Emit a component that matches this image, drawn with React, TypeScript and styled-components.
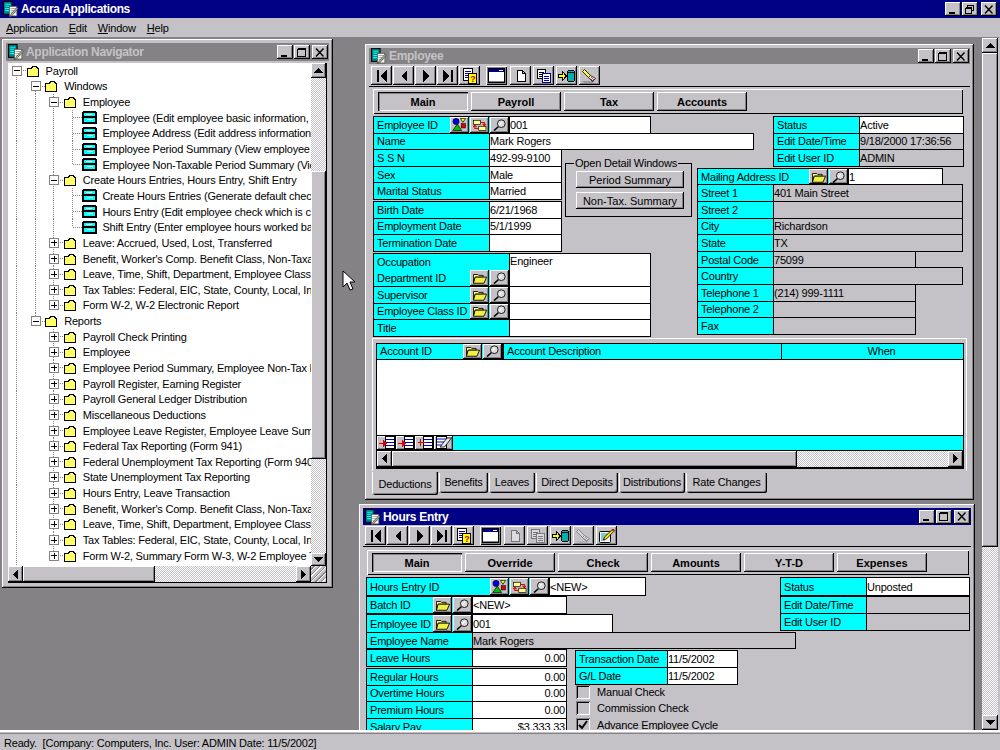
import React from 'react';
import styled, { createGlobalStyle, css } from 'styled-components';

const FACE = '#c4c2c6';
const GRAY = '#848284';
const NAVY = '#000084';
const CYAN = '#00ffff';

const GlobalStyle = createGlobalStyle`
  html, body {
    margin: 0;
    padding: 0;
    overflow: hidden;
    background: ${FACE};
  }
  * { box-sizing: border-box; }
  body {
    font-family: "Liberation Sans", Arial, sans-serif;
    font-size: 11px;
    letter-spacing: -0.2px;
    color: #000;
  }
`;

const raised = css`
  background-color: ${FACE};
  box-shadow: inset -1px -1px 0 #000, inset 1px 1px 0 #fff, inset -2px -2px 0 ${GRAY};
`;

const dither = css`
  background: repeating-conic-gradient(#fff 0 25%, ${FACE} 0 50%) 0 0 / 2px 2px;
`;

const Screen = styled.div`
  width: 1000px;
  height: 750px;
  display: flex;
  flex-direction: column;
  overflow: hidden;
  background: ${FACE};
`;

const AppTitle = styled.div`
  height: 18px;
  flex: none;
  background: ${NAVY};
  color: #fff;
  display: flex;
  align-items: center;
  padding: 0 3px;
  gap: 2px;
  font-size: 12px;
  font-weight: 700;
  letter-spacing: -0.35px;
`;

const TitleText = styled.span`
  flex: 1;
  white-space: nowrap;
`;

const WinButtons = styled.div<{ $spread?: number }>`
  display: flex;
  gap: 1px;
  flex: none;
  & > button:last-child { margin-left: ${p => p.$spread ?? 1}px; }
`;

const WinButton = styled.button`
  ${raised};
  width: 16px;
  height: 14px;
  border: none;
  padding: 0;
  display: flex;
  align-items: center;
  justify-content: center;
`;

const MenuBar = styled.nav`
  height: 19px;
  flex: none;
  display: flex;
  align-items: center;
  gap: 11px;
  padding: 0 6px;
`;

const MenuItem = styled.span`
  display: inline-block;
  font-size: 11px;
  &::first-letter { text-decoration: underline; }
`;

const Desktop = styled.div`
  flex: 1;
  min-height: 0;
  display: flex;
  background: ${GRAY};
  border-top: 1px solid ${GRAY};
  border-right: 2px solid ${FACE};
`;

const Canvas = styled.div`
  position: relative;
  flex: 1;
  overflow: hidden;
`;

const Cursor = styled.svg`
  position: absolute;
  left: 342px;
  top: 232px;
`;

const StatusBar = styled.footer`
  height: 20px;
  flex: none;
  border-top: 2px solid #fff;
  box-shadow: inset 0 1px 0 ${FACE}, inset 0 2px 0 ${GRAY};
  padding: 3px 0 0 4px;
  display: flex;
  align-items: center;
  white-space: pre;
`;

const Win = styled.section<{ $x: number; $y: number; $w: number; $h: number }>`
  ${raised};
  position: absolute;
  left: ${p => p.$x}px;
  top: ${p => p.$y}px;
  width: ${p => p.$w}px;
  height: ${p => p.$h}px;
  padding: 4px;
  display: flex;
  flex-direction: column;
`;

const WinTitle = styled.header<{ $active?: boolean; $h?: number }>`
  flex: none;
  height: ${p => p.$h ?? 16}px;
  background: ${p => (p.$active ? NAVY : GRAY)};
  color: ${p => (p.$active ? '#fff' : FACE)};
  display: flex;
  align-items: center;
  padding: 0 1px 0 2px;
  gap: 2px;
  font-size: 12px;
  font-weight: 700;
  letter-spacing: -0.3px;
`;

/* scrollbars */
const VBar = styled.div<{ $w?: number }>`
  flex: 0 0 ${p => p.$w ?? 15}px;
  display: flex;
  flex-direction: column;
`;

const HBar = styled.div<{ $h?: number }>`
  flex: 0 0 ${p => p.$h ?? 16}px;
  display: flex;
`;

const Arrow = styled.div<{ $size?: number }>`
  ${raised};
  flex: 0 0 ${p => p.$size ?? 15}px;
  display: flex;
  align-items: center;
  justify-content: center;
`;

const Thumb = styled.div<{ $size: number }>`
  ${raised};
  flex: 0 0 ${p => p.$size}px;
`;

const Track = styled.div<{ $size?: number }>`
  ${dither};
  flex: ${p => (p.$size ? `0 0 ${p.$size}px` : '1')};
`;

const Corner = styled.div`
  flex: 0 0 15px;
  background-color: ${FACE};
  background-image: repeating-linear-gradient(135deg, transparent 0 2px, ${GRAY} 2px 3px, #fff 3px 4px);
`;

/* tree */
const NavBody = styled.div`
  flex: 1;
  min-height: 0;
  margin: 2px 2px 1px 2px;
  display: flex;
  flex-direction: column;
  border-right: 1px solid #000;
  border-bottom: 1px solid #000;
`;

const TreeRowWrap = styled.div`
  flex: 1;
  min-height: 0;
  display: flex;
`;

const Tree = styled.div`
  flex: 1;
  min-width: 0;
  background: #fff;
  overflow: hidden;
`;

const TreeRow = styled.div`
  height: 15.645px;
  display: flex;
  align-items: center;
  white-space: nowrap;
`;

const Cell = styled.span<{ $v?: 'full' | 'up' | 'down'; $h?: boolean }>`
  flex: 0 0 18.6px;
  height: 100%;
  display: flex;
  align-items: center;
  background-repeat: no-repeat;
  background-image:
    ${p => (p.$v ? `repeating-linear-gradient(to bottom, ${GRAY} 0 1px, transparent 1px 2px)` : 'none')},
    ${p => (p.$h ? `repeating-linear-gradient(to right, ${GRAY} 0 1px, transparent 1px 2px)` : 'none')};
  background-size: 1px ${p => (p.$v === 'full' ? '100%' : '50%')}, 10px 1px;
  background-position: 8px ${p => (p.$v === 'down' ? '100%' : '0')}, 9px 50%;
`;

const Expander = styled.span<{ $open: boolean }>`
  width: 10px;
  height: 10px;
  margin-left: 4px;
  border: 1px solid ${GRAY};
  background-color: #fff;
  background-repeat: no-repeat;
  background-position: center;
  background-image:
    linear-gradient(#000, #000)
    ${p => (p.$open ? '' : ', linear-gradient(#000, #000)')};
  background-size: 6px 1px ${p => (p.$open ? '' : ', 1px 6px')};
`;

const NodeIcon = styled.span<{ $w: number }>`
  flex: 0 0 ${p => p.$w}px;
  display: flex;
  align-items: center;
`;

/* toolbars */
const ToolBar = styled.div<{ $h?: number; $top?: number }>`
  flex: none;
  height: ${p => p.$h ?? 23}px;
  padding: ${p => p.$top ?? 2}px 0 0 2px;
  display: flex;
  align-items: flex-start;
  border-bottom: 1px solid #000;
`;

const ToolGroup = styled.div<{ $after?: number }>`
  display: flex;
  gap: 1px;
  margin-right: ${p => p.$after ?? 2}px;
`;

const ToolButton = styled.button<{ $off?: boolean; $sunk?: boolean }>`
  ${raised};
  width: 21px;
  height: 19px;
  border: none;
  padding: 0;
  display: flex;
  align-items: center;
  justify-content: center;
  ${p => p.$off && 'svg { filter: grayscale(1) opacity(0.4); }'}
  ${p => p.$sunk && `box-shadow: inset 1px 1px 0 #fff, inset -1px -1px 0 #000, inset 2px 2px 0 ${GRAY}, inset -2px -2px 0 ${GRAY};`}
`;

const PagePanel = styled.div<{ $left: number; $top: number; $w: number }>`
  flex: none;
  margin: ${p => p.$top}px 0 0 ${p => p.$left}px;
  width: ${p => p.$w}px;
  height: 25px;
  padding: 3px 0 0 5px;
  display: flex;
  gap: 2px;
  background: ${FACE};
  box-shadow: inset 1px 1px 0 #fff, inset -1px -1px 0 #000;
`;

const PageTab = styled.button<{ $on?: boolean }>`
  ${raised};
  width: 90px;
  height: 19px;
  margin-right: 1px;
  border: none;
  padding: 0;
  font: 700 11px "Liberation Sans", Arial, sans-serif;
  color: #000;
  ${p => p.$on && `box-shadow: inset 1px 1px 0 #000, inset 2px 2px 0 ${GRAY}, inset -1px -1px 0 #fff;`}
`;

/* form cells */
const Form = styled.div<{ $left: number }>`
  flex: none;
  display: flex;
  padding: 2px 0 0 ${p => p.$left}px;
`;

const Col = styled.div<{ $w?: number; $pushed?: number; $down?: number }>`
  flex: 0 0 ${p => (p.$w ? `${p.$w}px` : 'auto')};
  min-width: 0;
  margin-left: ${p => p.$pushed ?? 0}px;
  margin-top: ${p => p.$down ?? 0}px;
`;

const Split = styled.div`
  display: flex;
  align-items: flex-start;
`;

const Stack = styled.div<{ $gap?: number }>`
  margin-bottom: ${p => p.$gap ?? 2}px;
`;

const Field = styled.div<{ $h?: number }>`
  display: flex;
  height: ${p => p.$h ?? 17.6}px;
  margin-bottom: -1px;
`;

const Label = styled.div<{ $w: number }>`
  flex: 0 0 ${p => p.$w}px;
  background: ${CYAN};
  border: 1px solid #000;
  padding-left: 3px;
  display: flex;
  align-items: center;
  justify-content: space-between;
  white-space: nowrap;
  overflow: hidden;
`;

const DoubleLabel = styled(Label)`
  flex-direction: column;
  align-items: stretch;
`;

const LabelLine = styled.div`
  flex: 1;
  display: flex;
  align-items: center;
  justify-content: space-between;
`;

const Value = styled.div<{ $w: number; $gray?: boolean; $right?: boolean }>`
  flex: 0 0 ${p => p.$w}px;
  margin-left: -1px;
  background: ${p => (p.$gray ? FACE : '#fff')};
  border: 1px solid #000;
  padding: ${p => (p.$right ? '0 1px 0 0' : '0')};
  display: flex;
  align-items: center;
  justify-content: ${p => (p.$right ? 'flex-end' : 'flex-start')};
  white-space: nowrap;
  overflow: hidden;
`;

const TopValue = styled(Value)`
  align-items: flex-start;
  padding-top: 1px;
`;

const Tools = styled.span`
  display: flex;
  gap: 1px;
  flex: none;
  align-self: stretch;
`;

const MiniButton = styled.span`
  ${raised};
  width: 19px;
  display: flex;
  align-items: center;
  justify-content: center;
`;

const DetailGroup = styled.fieldset`
  width: 127px;
  min-width: 0;
  height: 60px;
  margin: 8px 0 0 2px;
  padding: 2px 6px 0 10px;
  border: 1px solid #000;
  display: flex;
  flex-direction: column;
  gap: 4px;
`;

const DetailLegend = styled.legend`
  padding: 0 1px;
  margin-left: -2px;
  white-space: nowrap;
`;

const DetailButton = styled.button`
  ${raised};
  width: 108px;
  height: 17px;
  flex: none;
  border: none;
  padding: 0;
  font: 11px "Liberation Sans", Arial, sans-serif;
  color: #000;
`;

/* embedded grid */
const GridPanel = styled.div`
  flex: none;
  margin: 2px 0 0 3px;
  width: 595px;
  height: 133px;
  padding: 5px 3px 0 4px;
  box-shadow: inset 1px 1px 0 #fff, inset -1px 0 0 #fff;
`;

const Grid = styled.div`
  width: 588px;
  height: 126px;
  border: 1px solid #000;
  border-bottom-width: 2px;
  display: flex;
  flex-direction: column;
  background: #fff;
`;

const GridHead = styled.div`
  flex: 0 0 16px;
  display: flex;
  background: ${CYAN};
  border-bottom: 1px solid #000;
`;

const HeadCell = styled.div<{ $w?: number; $center?: boolean; $rule?: number }>`
  flex: ${p => (p.$w ? `0 0 ${p.$w}px` : '1')};
  display: flex;
  align-items: center;
  justify-content: ${p => (p.$center ? 'center' : 'space-between')};
  padding-left: ${p => (p.$center ? 18 : 3)}px;
  border-right: ${p => p.$rule ?? 0}px solid #000;
  white-space: nowrap;
`;

const GridBody = styled.div`
  flex: 1;
`;

const GridTools = styled.div`
  flex: 0 0 16px;
  display: flex;
  background: ${CYAN};
  border-top: 1px solid #000;
  border-bottom: 1px solid #000;
`;

const GridTool = styled.span`
  ${raised};
  flex: 0 0 19px;
  display: flex;
  align-items: center;
  justify-content: center;
`;

const GridScroll = styled(HBar)`
  flex: 0 0 16px;
  background: ${FACE};
`;

const TabStrip = styled.div`
  flex: none;
  display: flex;
  align-items: flex-start;
  margin: 1px 0 0 3px;
  gap: 1px;
`;

const BottomTab = styled.div<{ $w: number; $on?: boolean }>`
  flex: 0 0 ${p => p.$w}px;
  height: ${p => (p.$on ? 23 : 20)}px;
  padding-top: ${p => (p.$on ? 6 : 3)}px;
  margin-top: ${p => (p.$on ? 0 : 1)}px;
  text-align: center;
  white-space: nowrap;
  background: ${FACE};
  border-bottom-left-radius: 2px;
  border-bottom-right-radius: 2px;
  box-shadow: inset 1px 0 0 #fff, inset -1px -1px 0 #000, inset -2px -2px 0 ${GRAY};
`;

const CheckRow = styled.label`
  height: 16.6px;
  display: flex;
  align-items: center;
  gap: 7px;
  white-space: nowrap;
  margin-left: 1px;
`;

const CheckBox = styled.span`
  width: 14px;
  height: 14px;
  flex: none;
  display: flex;
  align-items: center;
  justify-content: center;
  box-shadow: inset 1px 1px 0 ${GRAY}, inset -1px -1px 0 #fff, inset 2px 2px 0 #000;
`;

/* drawings */
const Svg: React.FC<{ w?: number; h?: number; children: React.ReactNode }> = ({ w = 16, h = 16, children }) => (
  <svg width={w} height={h} viewBox={`0 0 ${w} ${h}`} shapeRendering="crispEdges">{children}</svg>
);

const Min = () => <Svg w={10} h={9}><rect x="1" y="7" width="6" height="2" /></Svg>;
const Max = () => <Svg w={10} h={9}><path d="M.5 1.5h8v7h-8z M.5 .5h8" fill="none" stroke="#000" /></Svg>;
const Restore = () => (
  <Svg w={10} h={9}>
    <path d="M2.5 2.5v-2h6v5h-2 M.5 3.5h6v5h-6z M.5 2.5h6 M2.5 .5h6" fill="none" stroke="#000" />
  </Svg>
);
const Close = () => (
  <svg width="10" height="9" viewBox="0 0 10 9"><path d="M1 0.5l7.5 8M8.5 0.5l-7.5 8" stroke="#000" strokeWidth="1.4" /></svg>
);

const AppIcon = () => (
  <svg width="16" height="16" viewBox="0 0 15 15" style={{ flex: 'none' }}>
    <rect x="0.5" y="0.5" width="8" height="12" fill="#008284" stroke="#000" />
    <path d="M2 3h5M2 5h5M2 7h5M2 9h5" stroke="#00ffff" />
    <rect x="6" y="5" width="7" height="9" fill="#fff" stroke="#555" strokeWidth="0.7" />
    <path d="M7 7h5M7 9h5M7 11h5" stroke="#888" strokeWidth="0.7" />
    <path d="M14 7l-6 7-2 1 1-2 6-7z" fill="#c4c28a" stroke="#333" strokeWidth="0.6" />
  </svg>
);

const Folder = () => (
  <Svg w={13} h={12}>
    <path d="M.5 3.5v8h11v-8h-1l-1-2h-4l-1 2z" fill="#ffff66" stroke="#000" />
    <path d="M1 3.5h4" stroke="#000" />
  </Svg>
);

const FormIcon = () => (
  <Svg w={15} h={13}>
    <rect width="15" height="13" x="0" y="0" fill="#000" />
    <rect x="2" y="2" width="11" height="3" fill="#00ffff" />
    <rect x="4" y="3" width="6" height="1" fill="#fff" />
    <rect x="2" y="7" width="11" height="4" fill="#00ffff" />
    <rect x="5" y="8" width="6" height="1" fill="#fff" />
    <rect x="0" y="0" width="1" height="1" fill="#fff" />
    <rect x="14" y="0" width="1" height="1" fill="#fff" />
  </Svg>
);

const UpArrow = () => <Svg w={9} h={5}><path d="M4.5 0L9 5H0z" /></Svg>;
const DownArrow = () => <Svg w={9} h={5}><path d="M0 0h9L4.5 5z" /></Svg>;
const LeftArrow = () => <Svg w={5} h={9}><path d="M5 0v9L0 4.5z" /></Svg>;
const RightArrow = () => <Svg w={5} h={9}><path d="M0 0v9l5-4.5z" /></Svg>;

const NavFirst = () => <Svg><path d="M3 2h2v12H3zM13 2v12L6 8z" /></Svg>;
const NavPrev = () => <Svg><path d="M11 2v12L5 8z" /></Svg>;
const NavNext = () => <Svg><path d="M5 2v12l6-6z" /></Svg>;
const NavLast = () => <Svg><path d="M11 2h2v12h-2zM3 2v12l7-6z" /></Svg>;

const HelpIcon = () => (
  <Svg>
    <rect x="1.5" y="0.5" width="9" height="12" fill="#fff" stroke="#000" />
    <path d="M3 3h6M3 5h6M3 7h3M3 9h3" stroke="#0000c0" />
    <rect x="6.5" y="5.5" width="8" height="10" fill="#ffff00" stroke="#000" />
    <text x="8.2" y="14" fontFamily="Liberation Sans" fontSize="9" fontWeight="700" fill="#c00000">?</text>
  </Svg>
);

const WindowIcon = () => (
  <Svg w={17} h={15}>
    <rect x="0.5" y="0.5" width="16" height="14" fill="#fff" stroke="#000" />
    <rect x="1" y="1" width="15" height="3" fill="#000084" />
    <rect x="11" y="2" width="4" height="1" fill="#fff" />
    <rect x="1" y="13" width="15" height="1" fill="#848284" />
  </Svg>
);

const NewIcon = () => (
  <Svg><path d="M4.5 2.5h5l3 3v8h-8z M9.5 2.5v3h3" fill="#fff" stroke="#000" /></Svg>
);

const CopyIcon = () => (
  <Svg>
    <rect x="1.5" y="1.5" width="8" height="9" fill="#fff" stroke="#000" />
    <path d="M3 4h5M3 6h5M3 8h5" stroke="#000" />
    <rect x="6.5" y="5.5" width="8" height="9" fill="#fff" stroke="#000084" />
    <path d="M8 8h5M8 10h5M8 12h5" stroke="#0000c0" />
  </Svg>
);

const DbIcon = () => (
  <Svg w={18} h={16}>
    <path d="M.5 6.5h4v-3l4 4.5-4 4.5v-3h-4z" fill="#ffff00" stroke="#000" />
    <rect x="9.5" y="2.5" width="7" height="11" rx="2" fill="#00b0b0" stroke="#000" />
    <path d="M10 4.5h6" stroke="#000" />
  </Svg>
);

const EraserIcon = () => (
  <svg width="18" height="16" viewBox="0 0 18 16">
    <path d="M1 13h13l-2 2H3z" fill="#9a9a9a" />
    <path d="M1.5 3.5l2-2 6 6-2 2z" fill="#ffff40" stroke="#000" strokeWidth="0.8" />
    <path d="M9.5 7.5l-2 2 4 4 3-3z" fill="#fff" stroke="#000" strokeWidth="0.8" />
    <path d="M10 9l3 3M9.5 10.5l2.5 2.5" stroke="#e02020" strokeWidth="0.9" />
  </svg>
);

const PencilIcon = () => (
  <svg width="17" height="16" viewBox="0 0 17 16">
    <rect x="1.5" y="3.5" width="11" height="11" rx="1" fill="#fff" stroke="#000" />
    <path d="M3 6h7M3 8h5M3 10h4M3 12h4" stroke="#0090a0" />
    <path d="M15 1l1.5 1.5-8 8.5-3 1 1-3z" fill="#ffe000" stroke="#000" strokeWidth="0.8" />
    <path d="M14 1.5l2.2 2.2" stroke="#e02020" strokeWidth="1.2" />
  </svg>
);

const ShapesIcon = () => (
  <svg width="15" height="13" viewBox="0 0 17 15">
    <circle cx="4.5" cy="4" r="3.6" fill="#0000e0" stroke="#000" strokeWidth="0.6" />
    <path d="M9.5 .5h6l-3 4.5z" fill="#ffff00" stroke="#000" strokeWidth="0.8" />
    <path d="M.7 14.5L6 7l5 7.5z" fill="#00c000" stroke="#000" strokeWidth="0.8" />
    <rect x="10.5" y="6.5" width="5" height="5" fill="#e00000" stroke="#000" strokeWidth="0.6" />
  </svg>
);

const SwapIcon = () => (
  <svg width="14" height="12" viewBox="0 0 16 14">
    <rect x="0.5" y="1.5" width="8" height="5" fill="#ffff90" stroke="#000" strokeWidth="0.8" />
    <rect x="6.5" y="8.5" width="8.5" height="5" fill="#ffff90" stroke="#000" strokeWidth="0.8" />
    <path d="M9 4h4v3M15 5.5l-2 2.5-2-2.5" fill="none" stroke="#e00000" strokeWidth="1.2" />
    <path d="M6 11H2V8M0 9.5l2-2.5 2 2.5" fill="none" stroke="#e00000" strokeWidth="1.2" />
  </svg>
);

const LensIcon = () => (
  <svg width="14" height="12" viewBox="0 0 16 14">
    <circle cx="9.5" cy="5.5" r="4.5" fill="#dcdcdc" stroke="#000" />
    <path d="M7 7.5l3-4" stroke="#fff" strokeWidth="1.2" />
    <path d="M6 9l-5 4.5" stroke="#000" strokeWidth="1.8" />
  </svg>
);

const OpenFolder = () => (
  <svg width="14" height="12" viewBox="0 0 16 13">
    <path d="M.5 2.5h5l1 1h5v2h-9l-2 7z" fill="#ffff8c" stroke="#000" />
    <path d="M.5 12.5l2-7h13l-3 7z" fill="#f0f040" stroke="#000" />
  </svg>
);

const RowInsertIcon: React.FC<{ flip?: boolean }> = ({ flip }) => (
  <Svg w={16} h={13}>
    <rect x="6.5" y="0.5" width="9" height="12" fill="#fff" stroke="#000" />
    <path d="M7 3h8M7 6h8M7 9h8" stroke="#0000c0" />
    <path d={flip ? 'M1 6h2v-3h1v7H3V7H1zM4 6h5v1H4z' : 'M0 7h4V4l4 3.5L4 11V8H0z'} fill="#e00000" />
  </Svg>
);

const RowEraseIcon = () => (
  <svg width="16" height="13" viewBox="0 0 16 13">
    <rect x="0.5" y="0.5" width="10" height="12" fill="#fff" stroke="#000" />
    <path d="M1 3h9M1 6h9M1 9h9" stroke="#0000c0" />
    <path d="M4 11l7-9h4.5l-7 9z" fill="#e8e8e8" stroke="#000" strokeWidth="0.8" />
  </svg>
);

const CheckMark = () => (
  <svg width="10" height="10" viewBox="0 0 10 10"><path d="M1 5l3 3 5-7" fill="none" stroke="#000" strokeWidth="2" /></svg>
);

const Caption: React.FC<{ restore?: boolean; spread?: number }> = ({ restore, spread }) => (
  <WinButtons $spread={spread}>
    <WinButton><Min /></WinButton>
    <WinButton>{restore ? <Restore /> : <Max />}</WinButton>
    <WinButton><Close /></WinButton>
  </WinButtons>
);

const PickTools: React.FC<{ kind?: 'id' | 'lookup' }> = ({ kind = 'lookup' }) => (
  <Tools>
    {kind === 'id' ? (
      <>
        <MiniButton><ShapesIcon /></MiniButton>
        <MiniButton><SwapIcon /></MiniButton>
      </>
    ) : (
      <MiniButton><OpenFolder /></MiniButton>
    )}
    <MiniButton><LensIcon /></MiniButton>
  </Tools>
);

/* tree data */
type Guide = 'pass' | 'none';
type Row = { lead: Guide[]; node: 'open' | 'closed' | 'leaf' | 'lastleaf'; v?: 'full' | 'up' | 'down'; icon?: 'form' | 'folder'; text: string };

const windowsLead: Guide[] = ['pass', 'pass'];
const reportsLead: Guide[] = ['pass', 'none'];

const leaf = (text: string, last = false): Row => ({ lead: [...windowsLead, 'pass'], node: last ? 'lastleaf' : 'leaf', icon: 'form', text });
const branch = (lead: Guide[], text: string, last = false, open = false): Row => ({ lead, node: open ? 'open' : 'closed', v: last ? 'up' : 'full', text });

const treeRows: Row[] = [
  { lead: [], node: 'open', v: 'down', text: 'Payroll' },
  { lead: ['pass'], node: 'open', v: 'down', text: 'Windows' },
  branch(windowsLead, 'Employee', false, true),
  leaf('Employee (Edit employee basic information, tax status and pay rates)'),
  leaf('Employee Address (Edit address information for the employee)'),
  leaf('Employee Period Summary (View employee earnings by period)'),
  leaf('Employee Non-Taxable Period Summary (View non-taxable earnings)', true),
  branch(windowsLead, 'Create Hours Entries, Hours Entry, Shift Entry', false, true),
  leaf('Create Hours Entries (Generate default checks for the employees)'),
  leaf('Hours Entry (Edit employee check which is calculated)'),
  leaf('Shift Entry (Enter employee hours worked based on shift)', true),
  branch(windowsLead, 'Leave: Accrued, Used, Lost, Transferred'),
  branch(windowsLead, "Benefit, Worker's Comp. Benefit Class, Non-Taxable Pay"),
  branch(windowsLead, 'Leave, Time, Shift, Department, Employee Class, Position'),
  branch(windowsLead, 'Tax Tables: Federal, EIC, State, County, Local, Insurance'),
  branch(windowsLead, 'Form W-2, W-2 Electronic Report', true),
  { lead: ['pass'], node: 'open', v: 'up', text: 'Reports' },
  branch(reportsLead, 'Payroll Check Printing'),
  branch(reportsLead, 'Employee'),
  branch(reportsLead, 'Employee Period Summary, Employee Non-Tax Period Summary'),
  branch(reportsLead, 'Payroll Register, Earning Register'),
  branch(reportsLead, 'Payroll General Ledger Distribution'),
  branch(reportsLead, 'Miscellaneous Deductions'),
  branch(reportsLead, 'Employee Leave Register, Employee Leave Summary'),
  branch(reportsLead, 'Federal Tax Reporting (Form 941)'),
  branch(reportsLead, 'Federal Unemployment Tax Reporting (Form 940)'),
  branch(reportsLead, 'State Unemployment Tax Reporting'),
  branch(reportsLead, 'Hours Entry, Leave Transaction'),
  branch(reportsLead, "Benefit, Worker's Comp. Benefit Class, Non-Taxable Pay"),
  branch(reportsLead, 'Leave, Time, Shift, Department, Employee Class, Position'),
  branch(reportsLead, 'Tax Tables: Federal, EIC, State, County, Local, Insurance'),
  branch(reportsLead, 'Form W-2, Summary Form W-3, W-2 Employee Totals', true),
  { lead: ['pass'], node: 'closed', text: '' },
];

const TreeLine: React.FC<{ row: Row }> = ({ row }) => (
  <TreeRow>
    {row.lead.map((g, i) => (
      <Cell key={i} $v={g === 'pass' ? 'full' : undefined} />
    ))}
    {row.node === 'leaf' || row.node === 'lastleaf' ? (
      <Cell $v={row.node === 'leaf' ? 'full' : 'up'} $h />
    ) : (
      <Cell $v={row.v} $h>
        <Expander $open={row.node === 'open'} />
      </Cell>
    )}
    <NodeIcon $w={row.icon === 'form' ? 20 : 19}>{row.icon === 'form' ? <FormIcon /> : <Folder />}</NodeIcon>
    {row.text}
  </TreeRow>
);

const bottomTabs: [string, number][] = [
  ['Benefits', 49],
  ['Leaves', 46],
  ['Direct Deposits', 82],
  ['Distributions', 66],
  ['Rate Changes', 81],
];

const RecordTools: React.FC<{ hours?: boolean }> = ({ hours }) => (
  <ToolBar $h={hours ? 22 : 23} $top={hours ? 1 : 2}>
    <ToolGroup $after={1}>
      <ToolButton><NavFirst /></ToolButton>
      <ToolButton><NavPrev /></ToolButton>
      <ToolButton><NavNext /></ToolButton>
      <ToolButton><NavLast /></ToolButton>
    </ToolGroup>
    <ToolGroup $after={6}>
      <ToolButton><HelpIcon /></ToolButton>
    </ToolGroup>
    <ToolGroup $after={3}>
      <ToolButton $sunk><WindowIcon /></ToolButton>
    </ToolGroup>
    <ToolGroup>
      <ToolButton $off={hours}><NewIcon /></ToolButton>
    </ToolGroup>
    <ToolGroup>
      <ToolButton $off={hours}><CopyIcon /></ToolButton>
    </ToolGroup>
    <ToolGroup>
      <ToolButton><DbIcon /></ToolButton>
    </ToolGroup>
    <ToolGroup>
      <ToolButton $off={hours}><EraserIcon /></ToolButton>
    </ToolGroup>
    {hours && (
      <ToolGroup>
        <ToolButton><PencilIcon /></ToolButton>
      </ToolGroup>
    )}
  </ToolBar>
);

const Navigator = () => (
  <Win $x={2} $y={1} $w={331} $h={549}>
    <WinTitle $h={18}>
      <AppIcon />
      <TitleText>Application Navigator</TitleText>
      <Caption />
    </WinTitle>
    <NavBody>
      <TreeRowWrap>
        <Tree>
          {treeRows.map((row, i) => (
            <TreeLine key={i} row={row} />
          ))}
        </Tree>
        <VBar>
          <Arrow><UpArrow /></Arrow>
          <Track $size={93} />
          <Thumb $size={288} />
          <Track />
          <Arrow $size={13}><DownArrow /></Arrow>
        </VBar>
      </TreeRowWrap>
      <HBar>
        <Arrow><LeftArrow /></Arrow>
        <Thumb $size={132} />
        <Track />
        <Arrow><RightArrow /></Arrow>
        <Corner />
      </HBar>
    </NavBody>
  </Win>
);

const EmployeeWindow = () => (
  <Win $x={365} $y={6} $w={609} $h={456}>
    <WinTitle>
      <AppIcon />
      <TitleText>Employee</TitleText>
      <Caption />
    </WinTitle>
    <RecordTools />
    <PagePanel $left={4} $top={2} $w={590}>
      <PageTab $on>Main</PageTab>
      <PageTab>Payroll</PageTab>
      <PageTab>Tax</PageTab>
      <PageTab>Accounts</PageTab>
    </PagePanel>
    <Form $left={4}>
      <Col $w={324}>
        <Stack $gap={0}>
          <Field>
            <Label $w={137}>Employee ID<PickTools kind="id" /></Label>
            <Value $w={142}>001</Value>
          </Field>
          <Field>
            <Label $w={117}>Name</Label>
            <Value $w={265}>Mark Rogers</Value>
          </Field>
        </Stack>
        <Split>
          <Col $w={190}>
            <Stack>
              <Field>
                <Label $w={117}>S S N</Label>
                <Value $w={73}>492-99-9100</Value>
              </Field>
              <Field>
                <Label $w={117}>Sex</Label>
                <Value $w={73}>Male</Value>
              </Field>
              <Field>
                <Label $w={117}>Marital Status</Label>
                <Value $w={73}>Married</Value>
              </Field>
            </Stack>
            <Stack>
              <Field>
                <Label $w={117}>Birth Date</Label>
                <Value $w={73}>6/21/1968</Value>
              </Field>
              <Field>
                <Label $w={117}>Employment Date</Label>
                <Value $w={73}>5/1/1999</Value>
              </Field>
              <Field>
                <Label $w={117}>Termination Date</Label>
                <Value $w={73}>&nbsp;</Value>
              </Field>
            </Stack>
          </Col>
          <DetailGroup>
            <DetailLegend>Open Detail Windows</DetailLegend>
            <DetailButton>Period Summary</DetailButton>
            <DetailButton>Non-Tax. Summary</DetailButton>
          </DetailGroup>
        </Split>
        <Stack $gap={0}>
          <Field $h={34.2}>
            <DoubleLabel $w={137}>
              <LabelLine>Occupation</LabelLine>
              <LabelLine>Department ID<PickTools /></LabelLine>
            </DoubleLabel>
            <TopValue $w={142}>Engineer</TopValue>
          </Field>
          <Field>
            <Label $w={137}>Supervisor<PickTools /></Label>
            <Value $w={142}>&nbsp;</Value>
          </Field>
          <Field>
            <Label $w={137}>Employee Class ID<PickTools /></Label>
            <Value $w={142}>&nbsp;</Value>
          </Field>
          <Field>
            <Label $w={137}>Title</Label>
            <Value $w={142}>&nbsp;</Value>
          </Field>
        </Stack>
      </Col>
      <Col>
        <Stack>
          <Col $pushed={76}>
            <Field>
              <Label $w={87}>Status</Label>
              <Value $w={105}>Active</Value>
            </Field>
            <Field>
              <Label $w={87}>Edit Date/Time</Label>
              <Value $w={105} $gray>9/18/2000 17:36:56</Value>
            </Field>
            <Field>
              <Label $w={87}>Edit User ID</Label>
              <Value $w={105} $gray>ADMIN</Value>
            </Field>
          </Col>
        </Stack>
        <Stack $gap={0}>
          <Field>
            <Label $w={152}>Mailing Address ID<PickTools /></Label>
            <Value $w={95}>1</Value>
          </Field>
          {[
            ['Street 1', '401 Main Street', 190],
            ['Street 2', '', 190],
            ['City', 'Richardson', 190],
            ['State', 'TX', 190],
            ['Postal Code', '75099', 143],
            ['Country', '', 190],
            ['Telephone 1', '(214) 999-1111', 143],
            ['Telephone 2', '', 143],
            ['Fax', '', 143],
          ].map(([name, val, w]) => (
            <Field key={name as string}>
              <Label $w={77}>{name}</Label>
              <Value $w={w as number} $gray>{val}</Value>
            </Field>
          ))}
        </Stack>
      </Col>
    </Form>
    <GridPanel>
      <Grid>
        <GridHead>
          <HeadCell $w={127} $rule={2}>Account ID<PickTools /></HeadCell>
          <HeadCell $w={278} $rule={1}>Account Description</HeadCell>
          <HeadCell $center>When</HeadCell>
        </GridHead>
        <GridBody />
        <GridTools>
          <GridTool><RowInsertIcon /></GridTool>
          <GridTool><RowInsertIcon /></GridTool>
          <GridTool><RowInsertIcon flip /></GridTool>
          <GridTool><RowEraseIcon /></GridTool>
        </GridTools>
        <GridScroll>
          <Arrow><LeftArrow /></Arrow>
          <Thumb $size={405} />
          <Track />
          <Arrow><RightArrow /></Arrow>
        </GridScroll>
      </Grid>
    </GridPanel>
    <TabStrip>
      <BottomTab $w={66} $on>Deductions</BottomTab>
      {bottomTabs.map(([name, w]) => (
        <BottomTab key={name} $w={w}>{name}</BottomTab>
      ))}
    </TabStrip>
  </Win>
);

const HoursWindow = () => (
  <Win $x={359} $y={466} $w={616} $h={300}>
    <WinTitle $h={17} $active>
      <AppIcon />
      <TitleText>Hours Entry</TitleText>
      <Caption />
    </WinTitle>
    <RecordTools hours />
    <PagePanel $left={4} $top={3} $w={602}>
      <PageTab $on>Main</PageTab>
      <PageTab>Override</PageTab>
      <PageTab>Check</PageTab>
      <PageTab>Amounts</PageTab>
      <PageTab>Y-T-D</PageTab>
      <PageTab>Expenses</PageTab>
    </PagePanel>
    <Form $left={3}>
      <Col $w={414}>
        <Stack $gap={1.4}>
          <Field $h={19}>
            <Label $w={184}>Hours Entry ID<PickTools kind="id" /></Label>
            <Value $w={97}>&lt;NEW&gt;</Value>
          </Field>
        </Stack>
        <Stack $gap={1}>
          <Field $h={18}>
            <Label $w={107}>Batch ID<PickTools /></Label>
            <Value $w={95}>&lt;NEW&gt;</Value>
          </Field>
        </Stack>
        <Stack $gap={1}>
          <Field $h={19}>
            <Label $w={107}>Employee ID<PickTools /></Label>
            <Value $w={141}>001</Value>
          </Field>
          <Field $h={17}>
            <Label $w={107}>Employee Name</Label>
            <Value $w={324} $gray>Mark Rogers</Value>
          </Field>
        </Stack>
        <Split>
          <Col $w={201}>
            <Stack>
              <Field>
                <Label $w={107}>Leave Hours</Label>
                <Value $w={95} $right>0.00</Value>
              </Field>
            </Stack>
            {[
              ['Regular Hours', '0.00'],
              ['Overtime Hours', '0.00'],
              ['Premium Hours', '0.00'],
              ['Salary Pay', '$3,333.33'],
            ].map(([name, val]) => (
              <Field key={name}>
                <Label $w={107}>{name}</Label>
                <Value $w={95} $right>{val}</Value>
              </Field>
            ))}
          </Col>
          <Col $pushed={8} $down={1}>
            <Stack $gap={0}>
              <Field>
                <Label $w={93}>Transaction Date</Label>
                <Value $w={71}>11/5/2002</Value>
              </Field>
              <Field>
                <Label $w={93}>G/L Date</Label>
                <Value $w={71}>11/5/2002</Value>
              </Field>
            </Stack>
            <CheckRow><CheckBox />Manual Check</CheckRow>
            <CheckRow><CheckBox />Commission Check</CheckRow>
            <CheckRow><CheckBox><CheckMark /></CheckBox>Advance Employee Cycle</CheckRow>
          </Col>
        </Split>
      </Col>
      <Col>
        <Stack $gap={1.4}>
          <Field $h={19}>
            <Label $w={87}>Status</Label>
            <Value $w={104}>Unposted</Value>
          </Field>
        </Stack>
        <Field>
          <Label $w={87}>Edit Date/Time</Label>
          <Value $w={104} $gray>&nbsp;</Value>
        </Field>
        <Field>
          <Label $w={87}>Edit User ID</Label>
          <Value $w={104} $gray>&nbsp;</Value>
        </Field>
      </Col>
    </Form>
  </Win>
);

export default function App() {
  return (
    <Screen>
      <GlobalStyle />
      <AppTitle>
        <AppIcon />
        <TitleText>Accura Applications</TitleText>
        <Caption restore spread={2} />
      </AppTitle>
      <MenuBar>
        <MenuItem>Application</MenuItem>
        <MenuItem>Edit</MenuItem>
        <MenuItem>Window</MenuItem>
        <MenuItem>Help</MenuItem>
      </MenuBar>
      <Desktop>
        <Canvas>
          <Navigator />
          <EmployeeWindow />
          <HoursWindow />
          <Cursor width="14" height="21" viewBox="0 0 14 21">
            <path d="M1 1v16l4-4 3 7 3-1-3-7h5z" fill="#fff" stroke="#000" />
          </Cursor>
        </Canvas>
        <VBar $w={16}>
          <Arrow><UpArrow /></Arrow>
          <Thumb $size={494} />
          <Track />
          <Arrow><DownArrow /></Arrow>
        </VBar>
      </Desktop>
      <StatusBar>Ready.  [Company: Computers, Inc. User: ADMIN Date: 11/5/2002]</StatusBar>
    </Screen>
  );
}
